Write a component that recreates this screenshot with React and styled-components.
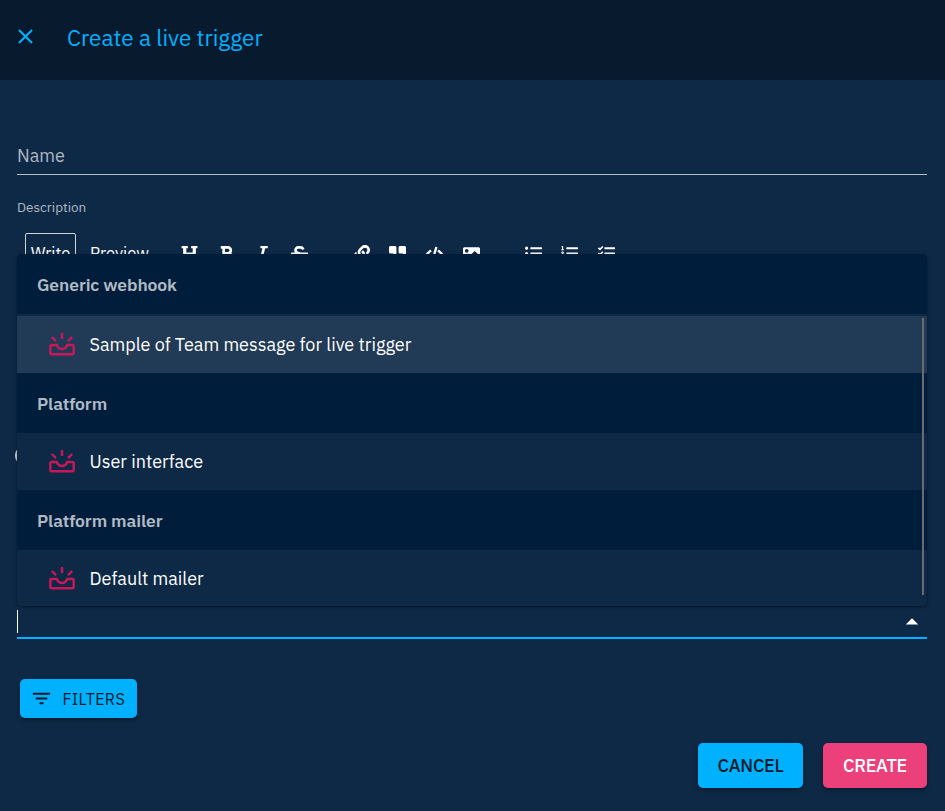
import React from 'react';
import styled, { createGlobalStyle } from 'styled-components';
import { FaHeading, FaBold, FaItalic, FaStrikethrough, FaLink, FaQuoteRight, FaCode, FaImage, FaListUl, FaListOl, FaTasks } from 'react-icons/fa';
import { MdClose, MdFilterList, MdArrowDropUp } from 'react-icons/md';

const GlobalStyle = createGlobalStyle`
  * { box-sizing: border-box; }
  body { margin: 0; background: #0e2946; font-family: 'IBM Plex Sans', Roboto, sans-serif; color: #fff; overflow: hidden; }
`;

const Drawer = styled.main`
  height: 811px;
  display: flex;
  flex-direction: column;
`;
const Header = styled.header`
  height: 80px;
  flex: none;
  display: flex;
  align-items: center;
  padding: 0 0 7px 13px;
  background: #071a2e;
  color: #00b1ff;
`;
const CloseIcon = styled(MdClose)`
  width: 25px;
  height: 25px;
`;
const Title = styled.h1`
  margin: 3px 0 0 29px;
  font-size: 22.5px;
  font-weight: 400;
  line-height: 32px;
`;
const Form = styled.form`
  height: 731px;
  padding: 60px 18px 0 17px;
  display: flex;
  flex-direction: column;
`;
const NameField = styled.div`
  height: 35px;
  border-bottom: 1px solid #b6bec7;
  color: #afb9c3;
  font-size: 18px;
  line-height: 31px;
`;
const Description = styled.div`
  margin-top: 24px;
  height: 16px;
  color: #afb9c3;
  font-size: 13.5px;
  line-height: 16px;
`;
const Toolbar = styled.div`
  margin-top: 18px;
  padding-left: 8px;
  height: 39px;
  display: flex;
  align-items: center;
`;
const Tab = styled.span`
  width: ${(p) => p.$width}px;
  height: 39px;
  border: 1px solid ${(p) => (p.$active ? '#cfd4da' : 'transparent')};
  border-radius: 2px;
  font-size: 16.6px;
  line-height: 38px;
  text-align: center;
  white-space: nowrap;
`;
const Tools = styled.div`
  display: flex;
  gap: 19.6px;
  margin-left: ${(p) => p.$gap}px;
  padding-top: 1px;
  svg { width: 17px; height: 17px; display: block; }
`;
const Connector = styled.div`
  position: relative;
  margin-top: 334px;
  height: 33px;
  flex: none;
  display: flex;
  justify-content: space-between;
  border-bottom: 2px solid #00b1ff;
`;
const Caret = styled.span`
  width: 1px;
  height: 23px;
  margin-top: 4px;
  background: #fff;
`;
const Arrow = styled(MdArrowDropUp)`
  width: 30px;
  height: 30px;
  margin-top: 1px;
`;
const Menu = styled.div`
  position: absolute;
  left: 0;
  right: 0;
  bottom: 31px;
  height: 352px;
  overflow: hidden;
  border-radius: 5px;
  background: #0e2946;
  box-shadow: 0 1px 3px rgba(0, 0, 0, 0.5);
`;
const Group = styled.div`
  height: 60px;
  margin-bottom: ${(p) => (p.$first ? 2 : 0)}px;
  padding-left: 20px;
  background: #001e3c;
  color: #b2bbc4;
  font-size: 17.5px;
  font-weight: 600;
  line-height: 61px;
  letter-spacing: -0.1px;
`;
const Option = styled.div`
  height: 57px;
  display: flex;
  align-items: center;
  gap: 13.5px;
  padding-left: 31px;
  background: ${(p) => (p.$selected ? '#213a55' : '#0e2946')};
  font-size: 18px;
`;
const Scrollbar = styled.div`
  position: absolute;
  right: 3px;
  top: 64px;
  width: 2px;
  height: 277px;
  background: #6b6b6b;
`;
const HiddenControl = styled.span`
  position: absolute;
  left: -2px;
  top: -159px;
  width: 14px;
  height: 17px;
  border-radius: 50%;
  border: 2px solid #ddd;
`;
const Button = styled.button`
  width: ${(p) => p.$width}px;
  height: ${(p) => p.$height}px;
  flex: none;
  display: flex;
  align-items: center;
  justify-content: center;
  gap: 9.5px;
  padding: 0;
  border: 0;
  border-radius: 5px;
  background: ${(p) => (p.$pink ? '#ec407a' : '#00b1ff')};
  color: ${(p) => (p.$pink ? '#fff' : '#051b28')};
  font: ${(p) => p.$weight} ${(p) => p.$size}px 'IBM Plex Sans', Roboto, sans-serif;
  letter-spacing: ${(p) => p.$spacing}px;
  box-shadow: 0 2px 4px rgba(0, 0, 0, 0.35);
  svg { width: 23px; height: 23px; margin-left: -2px; margin-top: -1px; }
`;
const FilterRow = styled.div`
  margin: 40px 0 0 3px;
`;
const Actions = styled.div`
  margin-top: 25px;
  display: flex;
  justify-content: flex-end;
  gap: 20px;
`;

const NotifierIcon = () => (
  <svg width="28" height="28" viewBox="0 0 28 28" fill="none" stroke="#c8185b" strokeWidth="2.4">
    <path d="M14 2v6M3.800 6l4.200 4.200M24.200 6l-4.200 4.200M3.800 14h5c1 2.600 2.900 4 5.200 4s4.200-1.400 5.200-4h5c.8 0 1.500.7 1.500 1.500v6.200c0 .8-.7 1.500-1.500 1.500H3.800c-.8 0-1.500-.7-1.500-1.500V15.500c0-.8.7-1.500 1.500-1.500z" />
  </svg>
);

const groups = [
  { name: 'Generic webhook', option: 'Sample of Team message for live trigger', selected: true },
  { name: 'Platform', option: 'User interface' },
  { name: 'Platform mailer', option: 'Default mailer' },
];

export default function App() {
  return (
    <>
      <GlobalStyle />
      <Drawer>
        <Header><CloseIcon /><Title>Create a live trigger</Title></Header>
        <Form>
          <NameField>Name</NameField>
          <Description>Description</Description>
          <Toolbar>
            <Tab $active $width={51}>Write</Tab>
            <Tab $width={87}>Preview</Tab>
            <Tools $gap={18}><FaHeading /><FaBold /><FaItalic /><FaStrikethrough /></Tools>
            <Tools $gap={45}><FaLink /><FaQuoteRight /><FaCode /><FaImage /></Tools>
            <Tools $gap={45}><FaListUl /><FaListOl /><FaTasks /></Tools>
          </Toolbar>
          <Connector>
            <HiddenControl />
            <Caret /><Arrow />
            <Menu>
              {groups.map((g, i) => (
                <React.Fragment key={g.name}>
                  <Group $first={i === 0}>{g.name}</Group>
                  <Option $selected={g.selected}><NotifierIcon />{g.option}</Option>
                </React.Fragment>
              ))}
              <Scrollbar />
            </Menu>
          </Connector>
          <FilterRow>
            <Button type="button" $width={117} $height={39} $size={16} $weight={400} $spacing={0.35}><MdFilterList />FILTERS</Button>
          </FilterRow>
          <Actions>
            <Button type="button" $width={105} $height={45} $size={18} $weight={500} $spacing={-0.25}>CANCEL</Button>
            <Button type="button" $pink $width={104} $height={45} $size={18} $weight={500} $spacing={-0.3}>CREATE</Button>
          </Actions>
        </Form>
      </Drawer>
    </>
  );
}
